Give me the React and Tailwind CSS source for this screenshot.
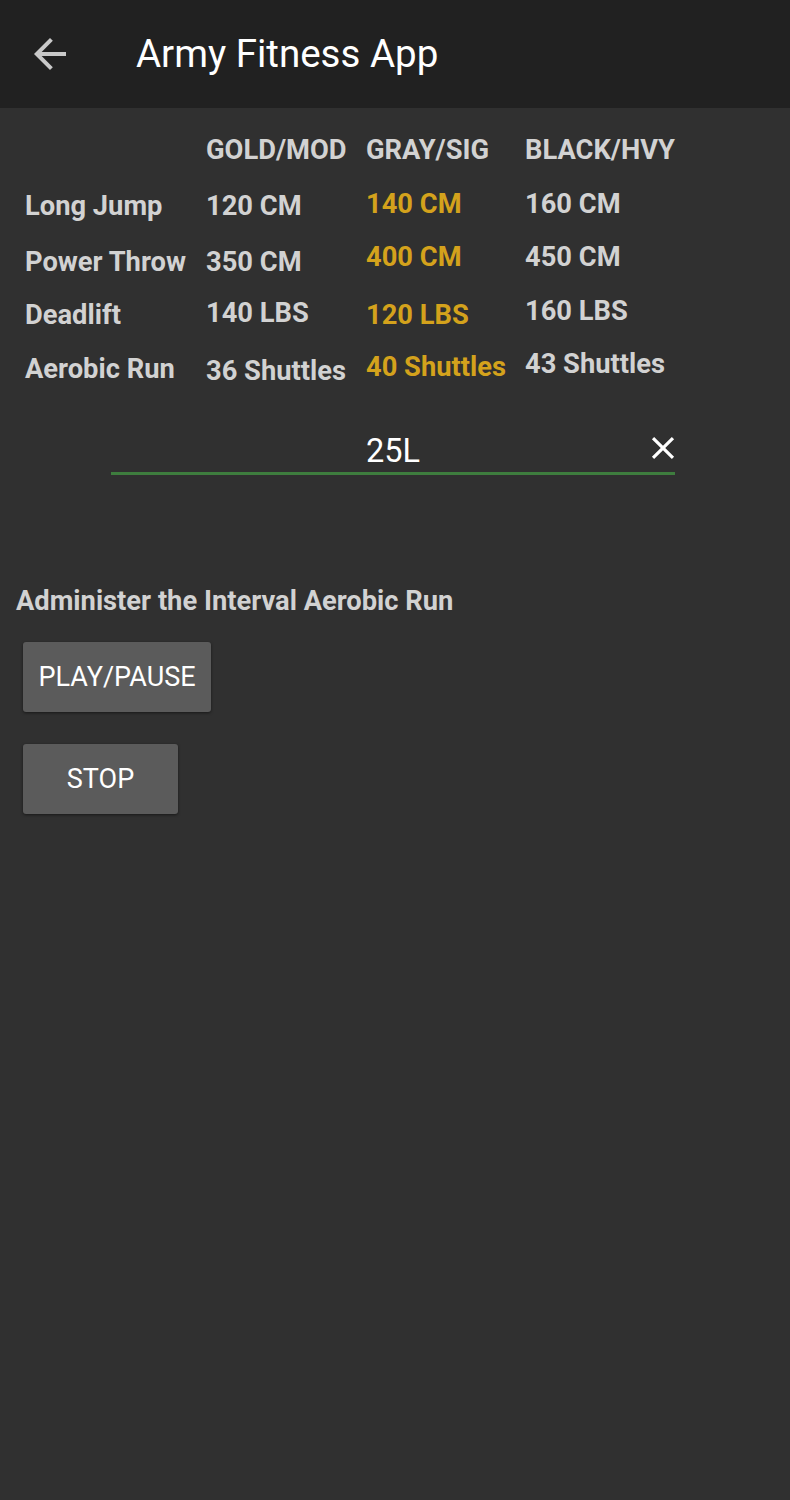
import React from "react";

const F = { fontFamily: "Roboto, 'Liberation Sans', sans-serif" };

function Cell({ children, gold, mt }) {
  return (
    <div
      className={`h-[30px] flex items-center font-bold text-[27.3px] leading-none whitespace-nowrap ${gold ? "text-[#d4a21c]" : "text-[#d2d2d2]"} ${mt}`}
    >
      {children}
    </div>
  );
}

export default function App() {
  return (
    <div className="w-[790px] h-[1500px] bg-[#303030] flex flex-col" style={F}>
      <header className="h-[108px] bg-[#212121] flex items-center shrink-0">
        <svg className="ml-[26px] w-[48px] h-[48px]" viewBox="0 0 24 24" fill="#c9c9c9">
          <path d="M20 11H7.83l5.59-5.59L12 4l-8 8 8 8 1.41-1.41L7.83 13H20v-2z" />
        </svg>
        <h1 className="ml-[62px] text-[38.5px] text-white font-normal leading-none">Army Fitness App</h1>
      </header>

      <div className="flex">
        <div className="ml-[25px] w-[181px] flex flex-col">
          <Cell mt="mt-[84px]">Long Jump</Cell>
          <Cell mt="mt-[26px]">Power Throw</Cell>
          <Cell mt="mt-[23px]">Deadlift</Cell>
          <Cell mt="mt-[24px]">Aerobic Run</Cell>
        </div>
        <div className="w-[160px] flex flex-col">
          <Cell mt="mt-[28px]">GOLD/MOD</Cell>
          <Cell mt="mt-[26px]">120 CM</Cell>
          <Cell mt="mt-[26px]">350 CM</Cell>
          <Cell mt="mt-[21px]">140 LBS</Cell>
          <Cell mt="mt-[28px]">36 Shuttles</Cell>
        </div>
        <div className="w-[159px] flex flex-col">
          <Cell mt="mt-[28px]">GRAY/SIG</Cell>
          <Cell gold mt="mt-[24px]">140 CM</Cell>
          <Cell gold mt="mt-[23px]">400 CM</Cell>
          <Cell gold mt="mt-[28px]">120 LBS</Cell>
          <Cell gold mt="mt-[22px]">40 Shuttles</Cell>
        </div>
        <div className="flex flex-col">
          <Cell mt="mt-[28px]">BLACK/HVY</Cell>
          <Cell mt="mt-[24px]">160 CM</Cell>
          <Cell mt="mt-[23px]">450 CM</Cell>
          <Cell mt="mt-[24px]">160 LBS</Cell>
          <Cell mt="mt-[23px]">43 Shuttles</Cell>
        </div>
      </div>

      <div className="ml-[111px] w-[564px] mt-[40px] h-[48px] border-b-[3px] border-[#3e7d3e] relative flex items-center justify-center">
        <span className="text-[32.5px] text-white leading-none mt-[4px]">25L</span>
        <svg className="absolute right-[-7px] top-[2px] w-[38px] h-[38px]" viewBox="0 0 24 24" fill="#ffffff">
          <path d="M19 6.41L17.59 5 12 10.59 6.41 5 5 6.41 10.59 12 5 17.59 6.41 19 12 13.41 17.59 19 19 17.59 13.41 12z" />
        </svg>
      </div>

      <p className="ml-[16px] mt-[113px] text-[27.3px] font-bold text-[#d2d2d2] leading-none">
        Administer the Interval Aerobic Run
      </p>

      <button className="ml-[23px] mt-[27px] w-[188px] h-[70px] bg-[#5b5b5b] rounded-[3px] text-white text-[27px] shadow-[0_1px_3px_rgba(0,0,0,0.5)] flex items-center justify-center">
        PLAY/PAUSE
      </button>
      <button className="ml-[23px] mt-[32px] w-[155px] h-[70px] bg-[#5b5b5b] rounded-[3px] text-white text-[27px] shadow-[0_1px_3px_rgba(0,0,0,0.5)] flex items-center justify-center">
        STOP
      </button>
    </div>
  );
}
